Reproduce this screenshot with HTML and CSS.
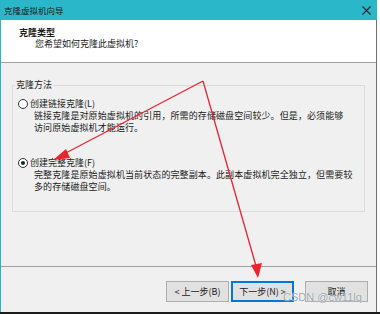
FILE: index.html
```html
<!DOCTYPE html>
<html lang="zh-CN">
<head>
    <meta charset="UTF-8">
    <title>克隆虚拟机向导</title>
    <link rel="stylesheet" href="styles.css">
</head>
<body>
    <div class="page">
        <div class="window">
            <div class="titlebar">
                <span class="title">克隆虚拟机向导</span>
                <svg class="close" width="9" height="9" viewBox="0 0 9 9">
                    <path d="M0.5 0.5 L8.5 8.5 M8.5 0.5 L0.5 8.5" stroke="#1a2a2e" stroke-width="1.1" fill="none"/>
                </svg>
            </div>
            <div class="frame">
                <div class="header">
                    <div class="header-title">克隆类型</div>
                    <div class="header-sub">您希望如何克隆此虚拟机?</div>
                </div>
                <div class="main">
                    <fieldset class="group">
                        <legend>克隆方法</legend>
                        <div class="option">
                            <span class="radio"></span>
                            <span>创建链接克隆(L)</span>
                        </div>
                        <div class="desc">
                            链接克隆是对原始虚拟机的引用，所需的存储磁盘空间较少。但是，必须能够<br>访问原始虚拟机才能运行。
                        </div>
                        <div class="option option-second">
                            <span class="radio checked"></span>
                            <span>创建完整克隆(F)</span>
                        </div>
                        <div class="desc">
                            完整克隆是原始虚拟机当前状态的完整副本。此副本虚拟机完全独立，但需要较<br>多的存储磁盘空间。
                        </div>
                    </fieldset>
                </div>
                <div class="footer">
                    <div class="btn">&lt; 上一步(B)</div>
                    <div class="btn btn-focus">下一步(N) &gt;</div>
                    <div class="btn btn-cancel">取消</div>
                </div>
            </div>
        </div>
        <!-- 标注箭头 -->
        <svg class="arrows" width="380" height="314" viewBox="0 0 380 314">
            <path d="M203 81 L62 155" stroke="#ea2530" stroke-width="1.3" fill="none"/>
            <polygon points="53,160 66,149 70,158" fill="#ea2530"/>
            <path d="M203 81 L256 266" stroke="#ea2530" stroke-width="1.3" fill="none"/>
            <polygon points="258,278 251,265 262,263" fill="#ea2530"/>
        </svg>
        <div class="watermark">CSDN @cw11lq</div>
    </div>
</body>
</html>
```

FILE: styles.css
```css
body {
    margin: 0;
    background: #fff;
    font-family: "Noto Sans CJK SC", "Liberation Sans", sans-serif;
    color: #1a1a1a;
}
.page {
    position: relative;
    width: 380px;
    height: 314px;
    border-bottom: 2px solid #1c1c1c;
    box-sizing: border-box;
    overflow: hidden;
}
.window {
    width: 377px;
    height: 312px;
    border-left: 1px solid #2ab4c8;
    box-sizing: border-box;
    display: flex;
    flex-direction: column;
}
.titlebar {
    height: 20px;
    background: #2bb7ca;
    display: flex;
    align-items: center;
    justify-content: space-between;
    padding: 0 6px 0 3px;
    font-size: 8.5px;
    line-height: 12px;
}
.close {
    margin-top: 1px;
}
.frame {
    flex: 1;
    display: flex;
    flex-direction: column;
    border-right: 1px solid #707070;
    background: #f0f0f0;
}
.header {
    height: 35px;
    background: #fff;
    border-bottom: 1px solid #a0a0a0;
    padding: 7px 0 0 18px;
    font-size: 9px;
}
.header-title {
    font-weight: bold;
    line-height: 11px;
}
.header-sub {
    line-height: 12px;
    padding-left: 16px;
}
.main {
    height: 203px;
    padding-top: 16px;
    box-sizing: border-box;
    font-size: 9px;
}
.group {
    margin: 0 11px 0 11px;
    border: 1px solid #dcdcdc;
    padding: 0 5px 18px 5px;
}
.group legend {
    padding: 0 1px;
    margin-left: -3px;
    line-height: 12px;
}
.option {
    display: flex;
    align-items: center;
    gap: 2px;
    line-height: 12px;
    margin-top: 7px;
}
.option-second {
    margin-top: 23px;
}
.radio {
    width: 8px;
    height: 8px;
    border: 1px solid #333;
    border-radius: 50%;
    background: #fff;
    display: flex;
    align-items: center;
    justify-content: center;
}
.radio.checked::after {
    content: "";
    width: 4px;
    height: 4px;
    border-radius: 50%;
    background: #222;
}
.desc {
    padding-left: 16px;
    line-height: 12px;
    letter-spacing: 0.1px;
}
.footer {
    flex: 1;
    border-top: 1px solid #a0a0a0;
    display: flex;
    justify-content: flex-end;
    align-items: flex-start;
    padding: 14px 8px 0 0;
    font-size: 9px;
}
.btn {
    width: 63px;
    height: 21px;
    box-sizing: border-box;
    background: #e1e1e1;
    border: 1px solid #adadad;
    display: flex;
    align-items: center;
    justify-content: center;
    margin-left: 2px;
}
.btn-focus {
    border-color: #0078d7;
    box-shadow: inset 0 0 0 1px #0078d7;
}
.btn-cancel {
    margin-left: 11px;
}
.arrows {
    position: absolute;
    left: 0;
    top: 0;
}
.watermark {
    position: absolute;
    left: 283px;
    top: 291px;
    font-family: "Liberation Sans", sans-serif;
    font-size: 11px;
    color: rgba(140, 150, 160, 0.85);
    text-shadow: 0 0 1px #fff;
}
```
